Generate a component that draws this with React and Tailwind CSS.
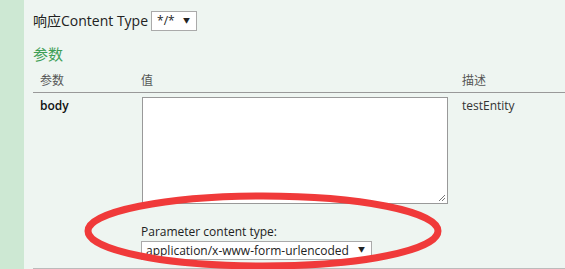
export default function App() {
  const font = { fontFamily: '"Open Sans", "Noto Sans CJK SC", sans-serif' };
  return (
    <div className="relative flex w-[565px] h-[269px] overflow-hidden text-[#222]" style={font}>
      <div className="w-[24px] shrink-0 bg-[#cde8d3]" />
      <div className="flex-1 bg-[#eef5f1] pl-[9px] pt-[11px]">
        <div className="flex items-center h-[20px]">
          <span className="text-[14px] leading-[20px]">响应Content Type</span>
          <div className="ml-[3px] flex items-center justify-between w-[46px] h-[20px] border border-[#aaa] bg-white pl-[5px] pr-[6px] text-[12px]">
            <span>*/*</span>
            <span className="text-[7px]">▼</span>
          </div>
        </div>
        <div className="mt-[13px] text-[15px] leading-[20px] text-[#3f9f57]">参数</div>
        <div className="mt-[6px] flex h-[23px] items-center border-b border-[#999] text-[12px] text-[#555]">
          <div className="w-[108px] pl-[7px]">参数</div>
          <div className="w-[321px]">值</div>
          <div>描述</div>
        </div>
        <div className="flex pt-[4px] text-[12px] border-b border-[#bbb] h-[176px]">
          <div className="w-[108px] pl-[7px] font-semibold text-[#111]">body</div>
          <div className="w-[321px] flex flex-col">
            <div className="relative ml-[1px] w-[306px] h-[107px] border border-[#999] bg-white">
              <svg className="absolute right-[1px] bottom-[1px]" width="9" height="9" viewBox="0 0 9 9">
                <path d="M8 2 L2 8 M8 5 L5 8" stroke="#777" strokeWidth="1" />
              </svg>
            </div>
            <div className="mt-[20px] leading-[16px]">Parameter content type:</div>
            <div className="mt-[1px] flex items-center justify-between w-[231px] h-[19px] border border-[#aaa] bg-white pl-[4px] pr-[6px]">
              <span>application/x-www-form-urlencoded</span>
              <span className="text-[7px]">▼</span>
            </div>
          </div>
          <div className="text-[#333]">testEntity</div>
        </div>
      </div>
      <svg className="absolute left-0 top-0 pointer-events-none" width="565" height="269">
        <ellipse cx="263" cy="231" rx="175" ry="35" fill="none" stroke="#f03a3a" strokeWidth="7" />
      </svg>
    </div>
  );
}
